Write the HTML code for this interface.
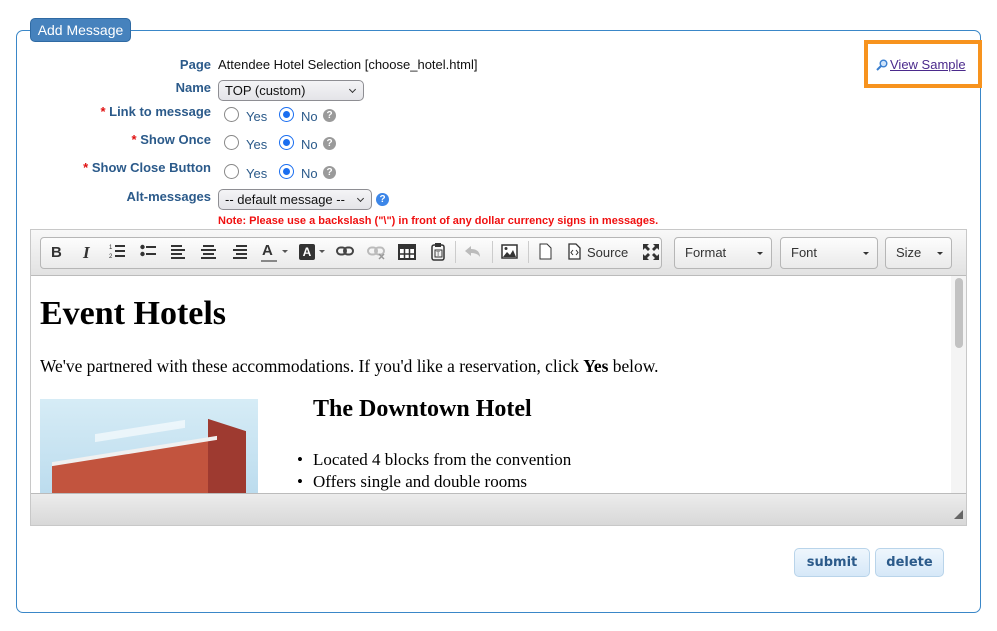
<!DOCTYPE html>
<html><head><meta charset="utf-8">
<style>
*{box-sizing:border-box;margin:0;padding:0}
body{width:997px;height:631px;background:#fff;font-family:"Liberation Sans",Arial,sans-serif;position:relative;overflow:hidden}
.abs{position:absolute}
.fs{left:16px;top:30px;width:965px;height:583px;border:1px solid #3a87c8;border-radius:7px}
.legend{left:30px;top:18px;width:101px;height:24px;background:#4682bd;border:1px solid #2f6aa3;border-radius:5px;color:#fff;font-size:14px;line-height:22px;text-align:center}
.lbl{right:786px;color:#2b5a8a;font-weight:bold;font-size:13px;text-align:right;white-space:nowrap}
.lbl b{color:#e01010}
.sel{background:linear-gradient(#f4f4f6,#e4e4e8);border:1px solid #8e8e93;border-radius:5px;font-size:13px;padding-left:6px;line-height:19px;color:#111}
.sel:after{content:"";position:absolute;right:8px;top:6px;width:4px;height:4px;border-right:1.5px solid #333;border-bottom:1.5px solid #333;transform:rotate(45deg)}
.radio{width:15px;height:15px;border-radius:50%;border:1px solid #888;background:#fff}
.radio.on{border:1.5px solid #1a6ef0}
.radio.on:after{content:"";position:absolute;left:2.5px;top:2.5px;width:7px;height:7px;border-radius:50%;background:#1a6ef0}
.rt{font-size:13px;color:#2b5a8a}
.help{width:13px;height:13px;border-radius:50%;background:#9a9a9a;color:#fff;font-size:10px;font-weight:bold;text-align:center;line-height:13px}
.ed{left:30px;top:229px;width:937px;height:297px;border:1px solid #c8c8c8;background:#fff}
.tb{left:0;top:0;width:935px;height:46px;background:linear-gradient(#f8f8f8,#e2e2e2);border-bottom:1px solid #bbb}
.grp{border:1px solid #b6b6b6;border-radius:4px;background:linear-gradient(#fdfdfd,#eaeaea);height:32px;top:7px}
.dd{font-size:13px;color:#333;line-height:30px;padding-left:10px}
.dd:after{content:"";position:absolute;right:8px;top:14px;border:3px solid transparent;border-top:3px solid #333}
.btn{height:29px;top:548px;border:1px solid #b9d4ea;border-radius:5px;background:linear-gradient(#eef6fd,#d6e8f8);color:#2b5a8a;font-weight:bold;font-size:13px;text-align:center;line-height:27px;font-family:"DejaVu Sans",sans-serif}
.serif{font-family:"Liberation Serif",serif;color:#000}
svg.i{position:absolute;top:13px}
</style></head><body>
<div class="abs fs"></div>
<div class="abs legend">Add Message</div>

<div class="abs lbl" style="top:57px">Page</div>
<div class="abs" style="left:218px;top:57px;font-size:13px;color:#111">Attendee Hotel Selection [choose_hotel.html]</div>
<div class="abs lbl" style="top:80px">Name</div>
<div class="abs sel" style="left:218px;top:80px;width:146px;height:21px">TOP (custom)</div>

<div class="abs lbl" style="top:104px"><b>*</b> Link to message</div>
<div class="abs lbl" style="top:132px"><b>*</b> Show Once</div>
<div class="abs lbl" style="top:160px"><b>*</b> Show Close Button</div>

<div class="abs radio" style="left:224px;top:107px"></div><div class="abs rt" style="left:246px;top:109px">Yes</div>
<div class="abs radio on" style="left:279px;top:107px"></div><div class="abs rt" style="left:301px;top:109px">No</div>
<div class="abs help" style="left:323px;top:109px">?</div>
<div class="abs radio" style="left:224px;top:135px"></div><div class="abs rt" style="left:246px;top:137px">Yes</div>
<div class="abs radio on" style="left:279px;top:135px"></div><div class="abs rt" style="left:301px;top:137px">No</div>
<div class="abs help" style="left:323px;top:137px">?</div>
<div class="abs radio" style="left:224px;top:164px"></div><div class="abs rt" style="left:246px;top:166px">Yes</div>
<div class="abs radio on" style="left:279px;top:164px"></div><div class="abs rt" style="left:301px;top:166px">No</div>
<div class="abs help" style="left:323px;top:166px">?</div>

<div class="abs lbl" style="top:189px">Alt-messages</div>
<div class="abs sel" style="left:218px;top:189px;width:154px;height:21px">-- default message --</div>
<div class="abs help" style="left:376px;top:193px;background:#3c86e8">?</div>
<div class="abs" style="left:218px;top:215px;font-size:11px;font-weight:bold;color:#f01010;white-space:nowrap">Note: Please use a backslash ("\") in front of any dollar currency signs in messages.</div>

<div class="abs" style="left:864px;top:40px;width:118px;height:48px;border:4px solid #f7931e"></div>
<svg class="abs" style="left:876px;top:59px" width="12" height="12" viewBox="0 0 12 12"><circle cx="7.5" cy="4.5" r="3.3" fill="#cfe4fb" stroke="#3a7fd0" stroke-width="1.4"/><path d="M5 7L1 11" stroke="#3a7fd0" stroke-width="2"/></svg>
<div class="abs" style="left:890px;top:57px;font-size:13px;color:#4b2a8c;text-decoration:underline">View Sample</div>

<div class="abs ed">
 <div class="abs tb">
  <div class="abs grp" style="left:9px;width:622px"></div>
  <div class="abs" style="left:20px;top:14px;font-size:15px;font-weight:bold;color:#333">B</div>
  <div class="abs" style="left:52px;top:13px;font-style:italic;font-family:'Liberation Serif',serif;font-size:17px;font-weight:bold;color:#333">I</div>
  <svg class="i" style="left:78px" width="16" height="16" viewBox="0 0 16 16" fill="#333"><rect x="6" y="2" width="10" height="2"/><rect x="6" y="7" width="10" height="2"/><rect x="6" y="12" width="10" height="2"/><text x="0" y="6" font-size="6" font-family="Liberation Sans">1</text><text x="0" y="15" font-size="6" font-family="Liberation Sans">2</text></svg>
  <svg class="i" style="left:109px" width="16" height="16" viewBox="0 0 16 16" fill="#333"><circle cx="2.5" cy="4" r="2.2"/><circle cx="2.5" cy="11" r="2.2"/><rect x="6" y="3" width="10" height="2"/><rect x="6" y="10" width="10" height="2"/></svg>
  <svg class="i" style="left:140px" width="15" height="16" viewBox="0 0 15 16" fill="#333"><rect x="0" y="2" width="11" height="2"/><rect x="0" y="6" width="14" height="2"/><rect x="0" y="10" width="11" height="2"/><rect x="0" y="14" width="14" height="2"/></svg>
  <svg class="i" style="left:170px" width="15" height="16" viewBox="0 0 15 16" fill="#333"><rect x="2" y="2" width="11" height="2"/><rect x="0" y="6" width="15" height="2"/><rect x="2" y="10" width="11" height="2"/><rect x="0" y="14" width="15" height="2"/></svg>
  <svg class="i" style="left:201px" width="15" height="16" viewBox="0 0 15 16" fill="#333"><rect x="4" y="2" width="11" height="2"/><rect x="1" y="6" width="14" height="2"/><rect x="4" y="10" width="11" height="2"/><rect x="1" y="14" width="14" height="2"/></svg>
  <div class="abs" style="left:231px;top:12px;font-size:15px;font-weight:bold;color:#333">A</div>
  <div class="abs" style="left:230px;top:30px;width:16px;height:2px;background:#888"></div>
  <div class="abs" style="left:251px;top:20px;border:3px solid transparent;border-top:3px solid #555"></div>
  <div class="abs" style="left:268px;top:14px;width:16px;height:16px;background:#333;color:#fff;font-size:12px;font-weight:bold;text-align:center;line-height:16px;border-radius:2px">A</div>
  <div class="abs" style="left:288px;top:20px;border:3px solid transparent;border-top:3px solid #555"></div>
  <svg class="i" style="left:305px;top:16px" width="18" height="10" viewBox="0 0 18 10"><rect x="1" y="1.5" width="9" height="7" rx="3.5" fill="none" stroke="#444" stroke-width="2"/><rect x="8" y="1.5" width="9" height="7" rx="3.5" fill="none" stroke="#444" stroke-width="2"/></svg>
  <svg class="i" style="left:336px;top:16px" width="18" height="14" viewBox="0 0 18 14"><rect x="1" y="1.5" width="9" height="7" rx="3.5" fill="none" stroke="#bbb" stroke-width="2"/><rect x="8" y="1.5" width="9" height="7" rx="3.5" fill="none" stroke="#bbb" stroke-width="2"/><path d="M12 8l5 5M17 8l-5 5" stroke="#999" stroke-width="1.5"/></svg>
  <svg class="i" style="left:367px;top:14px" width="18" height="16" viewBox="0 0 18 16"><rect x="1" y="1" width="16" height="14" fill="#fff" stroke="#333" stroke-width="2"/><rect x="1" y="1" width="16" height="4" fill="#333"/><path d="M6.5 5v10M11.5 5v10M1 10h16" stroke="#333" stroke-width="1.5"/></svg>
  <svg class="i" style="left:400px;top:12px" width="14" height="19" viewBox="0 0 14 19"><rect x="1" y="3" width="12" height="15" rx="2" fill="none" stroke="#333" stroke-width="1.5"/><rect x="4" y="1" width="6" height="4" fill="#333"/><rect x="4" y="8" width="7" height="7" fill="none" stroke="#333"/><text x="5.3" y="14" font-size="6" font-family="Liberation Sans" fill="#333">T</text></svg>
  <div class="abs" style="left:424px;top:11px;width:1px;height:22px;background:#ccc"></div>
  <svg class="i" style="left:434px;top:16px" width="16" height="12" viewBox="0 0 16 12"><path d="M6 0L0 5l6 5V7c4 0 7 1 9 4 0-5-3-8-9-8z" fill="#bbb"/></svg>
  <div class="abs" style="left:461px;top:11px;width:1px;height:22px;background:#ccc"></div>
  <svg class="i" style="left:470px;top:14px" width="17" height="15" viewBox="0 0 17 15"><rect x="1" y="1" width="15" height="13" fill="#fff" stroke="#333" stroke-width="1.5"/><path d="M2 13l4-5 3 3 3-5 3 7z" fill="#333"/><circle cx="5" cy="4.5" r="1.5" fill="#333"/></svg>
  <div class="abs" style="left:497px;top:11px;width:1px;height:22px;background:#ccc"></div>
  <svg class="i" style="left:508px;top:13px" width="13" height="17" viewBox="0 0 13 17"><path d="M1 1h7l4 4v11H1z" fill="#fff" stroke="#333"/></svg>
  <svg class="i" style="left:537px;top:13px" width="13" height="17" viewBox="0 0 13 17"><path d="M1 1h7l4 4v11H1z" fill="#fff" stroke="#333" stroke-width="1.3"/><path d="M5 7L3 9.5 5 12M8 7l2 2.5L8 12" fill="none" stroke="#333"/></svg>
  <div class="abs" style="left:556px;top:15px;font-size:13px;color:#333">Source</div>
  <svg class="i" style="left:612px;top:14px" width="16" height="16" viewBox="0 0 16 16" fill="#333"><path d="M0 0h6L4 2l3 3-2 2-3-3-2 2zM16 0v6l-2-2-3 3-2-2 3-3-2-2zM0 16v-6l2 2 3-3 2 2-3 3 2 2zM16 16h-6l2-2-3-3 2-2 3 3 2-2z"/></svg>
  <div class="abs grp dd" style="left:643px;width:98px">Format</div>
  <div class="abs grp dd" style="left:749px;width:98px">Font</div>
  <div class="abs grp dd" style="left:854px;width:67px">Size</div>
 </div>
 <div class="abs" style="left:920px;top:46px;width:15px;height:217px;background:#f4f4f4"></div>
 <div class="abs" style="left:924px;top:48px;width:8px;height:70px;background:#c2c2c2;border-radius:4px"></div>
 <div class="abs serif" style="left:9px;top:65px;font-size:34px;font-weight:bold">Event Hotels</div>
 <div class="abs serif" style="left:9px;top:126px;font-size:17.4px;white-space:nowrap">We've partnered with these accommodations. If you'd like a reservation, click <b>Yes</b> below.</div>
 <div class="abs" style="left:9px;top:169px;width:218px;height:94px;background:linear-gradient(#d6ecf6,#bcdcee);overflow:hidden">
  <div class="abs" style="left:12px;top:52px;width:165px;height:60px;background:#c2543e;transform:skewY(-9deg)"></div>
  <div class="abs" style="left:168px;top:26px;width:38px;height:80px;background:#9e3a30;transform:skewY(18deg)"></div>
  <div class="abs" style="left:12px;top:50px;width:165px;height:4px;background:#f0f0f0;transform:skewY(-9deg)"></div>
  <div class="abs" style="left:55px;top:28px;width:90px;height:8px;background:rgba(255,255,255,.6);transform:skewY(-9deg)"></div>
 </div>
 <div class="abs serif" style="left:282px;top:166px;font-size:24px;font-weight:bold">The Downtown Hotel</div>
 <div class="abs serif" style="left:266px;top:219px;font-size:17px;line-height:22px"><span style="display:inline-block;width:16px">•</span>Located 4 blocks from the convention<br><span style="display:inline-block;width:16px">•</span>Offers single and double rooms</div>
 <div class="abs" style="left:0;top:263px;width:935px;height:32px;background:linear-gradient(#ececec,#d8d8d8);border-top:1px solid #bbb"></div>
 <div class="abs" style="left:923px;top:280px;width:0;height:0;border-left:9px solid transparent;border-bottom:9px solid #666"></div>
</div>

<div class="abs btn" style="left:794px;width:76px">submit</div>
<div class="abs btn" style="left:875px;width:69px">delete</div>
</body></html>
